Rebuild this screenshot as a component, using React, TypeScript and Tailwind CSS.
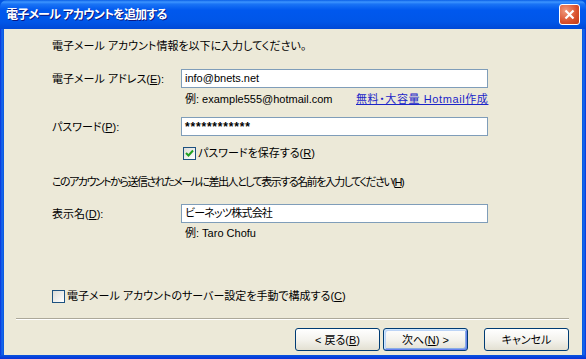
import React from "react";

const font = "font-['Liberation_Sans','Noto_Sans_CJK_JP',sans-serif]";

function U({ c }: { c: string }) {
  return <span className="underline underline-offset-[1px]">{c}</span>;
}

function CheckBox({ checked }: { checked: boolean }) {
  return (
    <div className="w-[13px] h-[13px] border border-[#1c5180] bg-gradient-to-br from-[#dcdcd7] to-white flex items-center justify-center shrink-0">
      {checked && (
        <svg width="9" height="9" viewBox="0 0 9 9">
          <path d="M1 4 L3.5 6.5 L8 1.5" stroke="#21a121" strokeWidth="2" fill="none" />
        </svg>
      )}
    </div>
  );
}

function Input({ children }: { children: React.ReactNode }) {
  return (
    <div className="w-[307px] h-[19px] border border-[#7f9db9] bg-white flex items-center pl-[3px] text-[11px] leading-none text-black">
      {children}
    </div>
  );
}

function Btn({ children, def }: { children: React.ReactNode; def?: boolean }) {
  return (
    <div
      className={
        "w-[85px] h-[23px] rounded-[3px] border border-[#003c74] bg-gradient-to-b from-white via-[#f4f3ee] to-[#e3e0d2] flex items-center justify-center text-[11px] text-black " +
        (def
          ? "shadow-[inset_1px_1px_0_#cee7ff,inset_-1px_-1px_0_#6982ee,inset_2px_2px_0_#bcd4f6,inset_-2px_-2px_0_#89ade4]"
          : "")
      }
    >
      {children}
    </div>
  );
}

export default function App() {
  return (
    <div className={`w-[586px] h-[359px] flex flex-col ${font} [font-feature-settings:'palt'] bg-[#0054e3]`}>
      {/* Title bar */}
      <div className="h-[29px] shrink-0 rounded-t-[7px] bg-[linear-gradient(to_bottom,#0a5fe6_0%,#3d95ff_7%,#1a74f5_14%,#0058ee_35%,#0056e8_75%,#0049d6_100%)] flex items-center pl-[6px] pr-[6px]">
        <div className="text-white font-bold text-[12px] tracking-[-0.8px] [text-shadow:1px_1px_0_#0a1883]">
          電子メール アカウントを追加する
        </div>
        <div className="ml-auto w-[21px] h-[21px] rounded-[3px] border border-white bg-[radial-gradient(circle_at_30%_30%,#f09a7d,#d9502c_60%,#c23b16)] flex items-center justify-center">
          <svg width="11" height="11" viewBox="0 0 11 11">
            <path d="M1.5 1.5 L9.5 9.5 M9.5 1.5 L1.5 9.5" stroke="white" strokeWidth="2.2" />
          </svg>
        </div>
      </div>

      {/* Body */}
      <div className="flex flex-1 min-h-0">
        <div className="w-[4px] bg-[linear-gradient(to_right,#0831d9,#166aee_50%,#0855dd)]" />
        <div className="flex-1 bg-[#ece9d8] flex flex-col text-[11px] leading-[14px] text-black">
          <div className="pl-[48px] pt-[10px]">電子メール アカウント情報を以下に入力してください。</div>

          <div className="pl-[48px] mt-[16px] flex items-center">
            <div className="w-[129px]">
              電子メール アドレス(<U c="E" />):
            </div>
            <Input>info@bnets.net</Input>
          </div>
          <div className="pl-[181px] mt-[4px] flex text-[11px]">
            <span className="w-[171px]">例: example555@hotmail.com</span>
            <span className="text-[#1b25c8] underline tracking-[0.6px]">無料・大容量 Hotmail作成</span>
          </div>

          <div className="pl-[48px] mt-[11px] flex items-center">
            <div className="w-[129px]">
              パスワード(<U c="P" />):
            </div>
            <Input>
              <span className="tracking-[0.8px] text-[12px] font-bold">************</span>
            </Input>
          </div>

          <div className="pl-[179px] mt-[10px] flex items-center gap-[2px]">
            <CheckBox checked />
            <span>
              パスワードを保存する(<U c="R" />)
            </span>
          </div>

          <div className="pl-[48px] mt-[15px] tracking-[-1.5px]">
            このアカウントから送信されたメールに差出人として表示する名前を入力してください(<U c="H" />)
          </div>

          <div className="pl-[48px] mt-[15px] flex items-center">
            <div className="w-[129px]">
              表示名(<U c="D" />):
            </div>
            <Input>
              <span className="tracking-[-0.8px]">ビーネッツ株式会社</span>
            </Input>
          </div>
          <div className="pl-[181px] mt-[3px]">例: Taro Chofu</div>

          <div className="pl-[48px] mt-[49px] flex items-center gap-[2px]">
            <CheckBox checked={false} />
            <span>
              電子メール アカウントのサーバー設定を手動で構成する(<U c="C" />)
            </span>
          </div>

          <div className="mx-[12px] mr-[13px] mt-[15px] border-t border-[#aca899] border-b border-b-white" />

          <div className="mt-[8px] flex justify-end pr-[13px]">
            <Btn>
              &lt; 戻る(<U c="B" />)
            </Btn>
            <div className="w-[3px]" />
            <Btn def>
              次へ(<U c="N" />) &gt;
            </Btn>
            <div className="w-[16px]" />
            <Btn>キャンセル</Btn>
          </div>
        </div>
        <div className="w-[4px] bg-[linear-gradient(to_right,#0855dd,#166aee_50%,#0831d9)]" />
      </div>
      <div className="h-[4px] shrink-0 bg-[linear-gradient(to_bottom,#0855dd,#0831d9)]" />
    </div>
  );
}
